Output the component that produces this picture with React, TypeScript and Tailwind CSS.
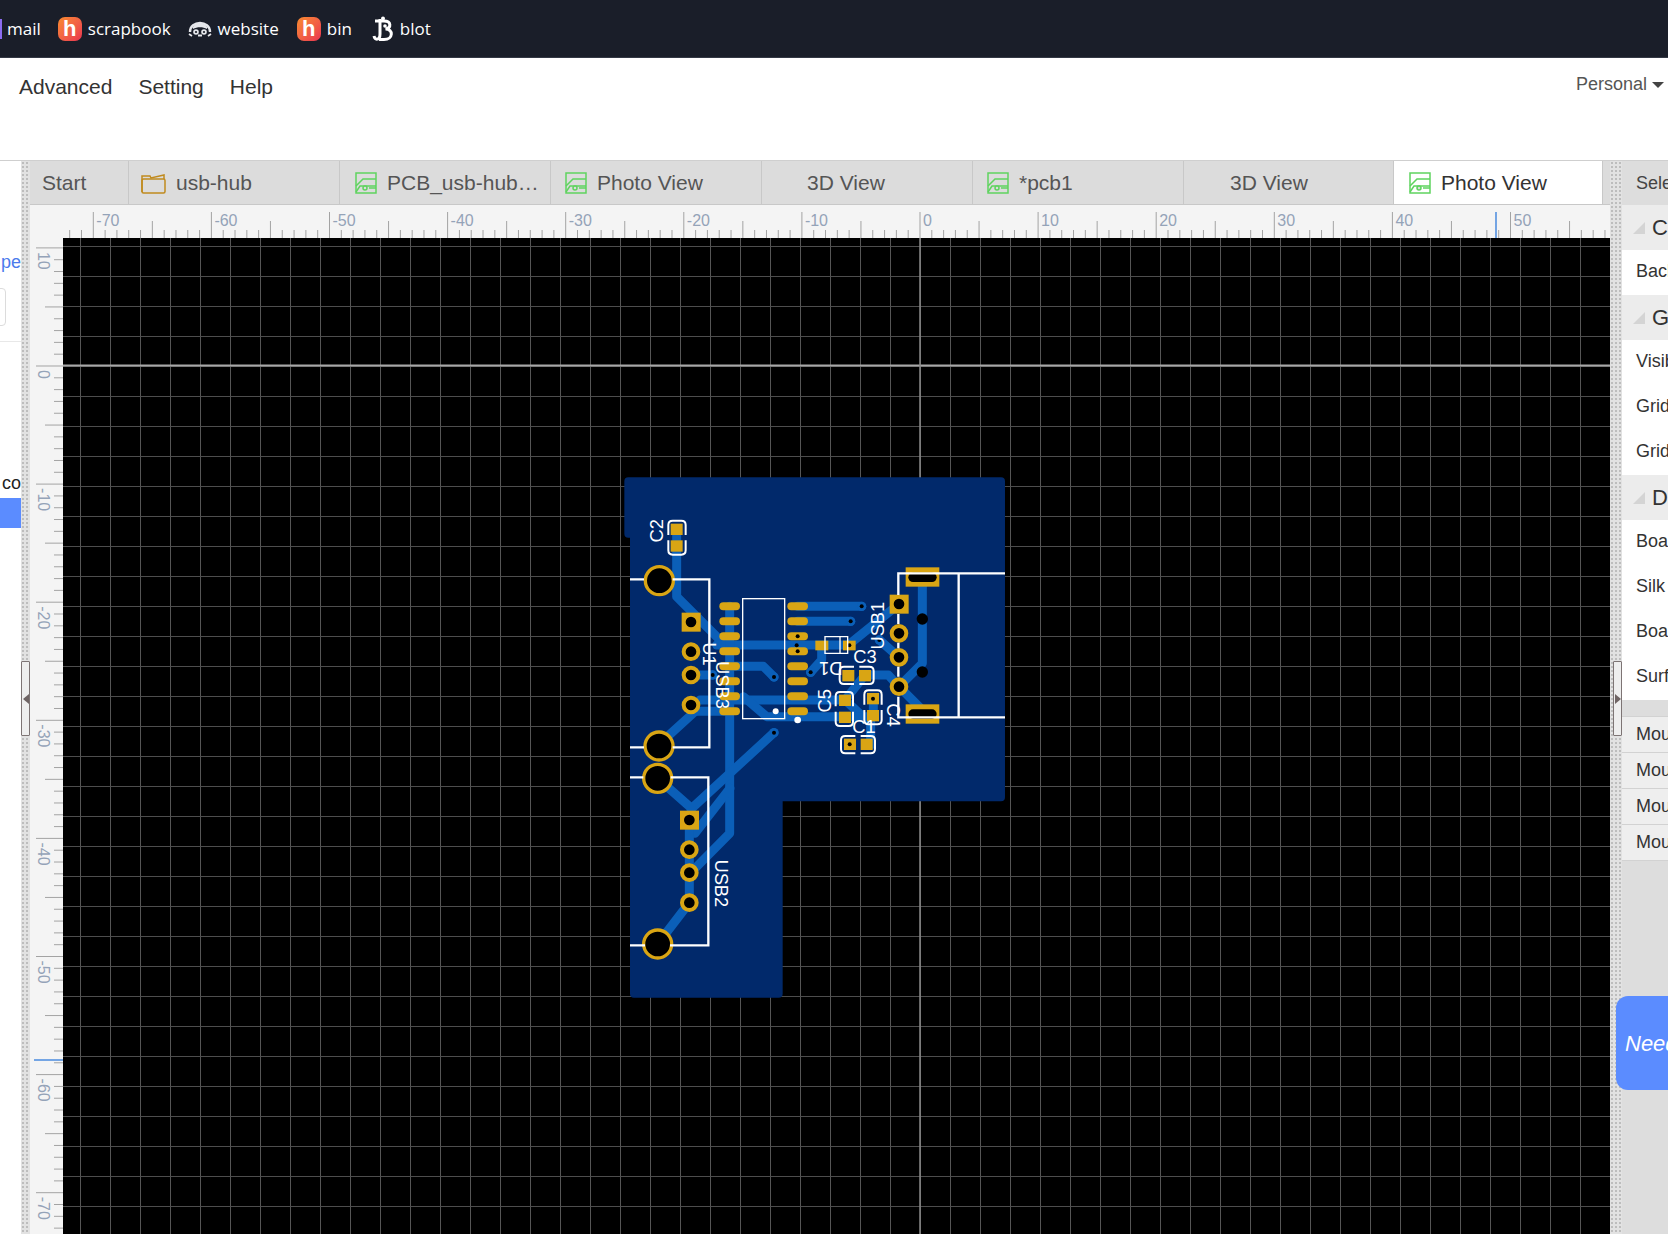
const dotted = 'bg-[#e2e2e2] bg-[radial-gradient(circle,#bdbdbd_1px,transparent_1px)] bg-[length:4px_4px]'

const ORIGIN_X = 920
const ORIGIN_Y = 366
const MM = 11.81

function range(from: number, to: number) {
  const out: number[] = []
  for (let i = from; i <= to; i++) out.push(i)
  return out
}

function HBadge() {
  return (
    <span className="flex h-6 w-6 items-center justify-center rounded-[7px] bg-gradient-to-br from-[#f98a2c] to-[#e9304f] font-['Liberation_Sans',sans-serif] text-[22px] font-bold leading-none text-white">
      h
    </span>
  )
}

function GhostIcon() {
  return (
    <svg width="24" height="24" viewBox="0 0 24 24" fill="none">
      <path d="M2 15 C2 3 22 3 22 15" stroke="#e5e7eb" strokeWidth="2.4" />
      <path d="M5 10 C8 5 16 5 19 10 L19 12 C15 9.5 9 9.5 5 12 Z" fill="#e5e7eb" />
      <circle cx="8" cy="15" r="2.8" fill="#e5e7eb" />
      <circle cx="16" cy="15" r="2.8" fill="#e5e7eb" />
      <circle cx="8" cy="15" r="1.1" fill="#1a1e29" />
      <circle cx="16" cy="15" r="1.1" fill="#1a1e29" />
      <path d="M1 17 L4 19 M23 17 L20 19 M10 18.5 H14" stroke="#e5e7eb" strokeWidth="1.8" />
    </svg>
  )
}

function BlotIcon() {
  return (
    <svg width="22" height="26" viewBox="0 0 22 26" fill="none">
      <path d="M3 5 H12 C19.5 5 19.5 12 13.5 13 C21.5 13 21.5 23.5 12 23.5 H7" stroke="#fff" strokeWidth="3" />
      <path d="M8 3 V18 C8 24.5 3 24.5 2 20" stroke="#fff" strokeWidth="3" />
      <circle cx="13" cy="10" r="1.8" fill="#fff" />
      <circle cx="11" cy="2.5" r="2" fill="#fff" />
    </svg>
  )
}

function FolderIcon() {
  return (
    <svg width="25" height="22" viewBox="0 0 25 22" fill="none" stroke="#c08a1e" strokeWidth="1.5">
      <path d="M1 20 V4 H9 L10 6 L23 3 V7" />
      <rect x="1" y="7" width="23" height="14" rx="1.5" />
    </svg>
  )
}

function PcbIcon() {
  return (
    <svg width="22" height="22" viewBox="0 0 22 22" fill="none" stroke="#5fd35f" strokeWidth="1.5">
      <rect x="1" y="1" width="20" height="20" />
      <path d="M1 14 L8 7 H21 M1 20 L5 14 H21 M14 16 H21" />
      <circle cx="10" cy="16" r="2" fill="#dcdcdc" />
    </svg>
  )
}

function TopBar() {
  const links = [
    { label: 'scrapbook', icon: <HBadge />, gap: 'ml-[17px]' },
    { label: 'website', icon: <GhostIcon />, gap: 'ml-[17px]' },
    { label: 'bin', icon: <HBadge />, gap: 'ml-[18px]' },
    { label: 'blot', icon: <BlotIcon />, gap: 'ml-[20px]' },
  ]
  return (
    <div className="flex h-[58px] shrink-0 items-center border-b border-[#343945] bg-[#1a1e29] pt-[1px] font-['Open_Sans',sans-serif] text-[17px] text-white">
      <span className="h-5 w-[2px] bg-[#8b6cf0]" />
      <span className="ml-[5px]">mail</span>
      {links.map((link) => (
        <div key={link.label} className={`flex items-center gap-[6px] ${link.gap}`}>
          {link.icon}
          <span>{link.label}</span>
        </div>
      ))}
    </div>
  )
}

function MenuBar() {
  return (
    <div className="flex h-[102px] shrink-0 items-start bg-white pl-[19px] pr-1 pt-[13px] font-['Liberation_Sans',sans-serif] text-[21px] text-[#333]">
      <span>Advanced</span>
      <span className="ml-[26px]">Setting</span>
      <span className="ml-[26px]">Help</span>
      <div className="ml-auto flex items-center gap-[5px] text-[18px] text-[#555]">
        <span>Personal</span>
        <span className="h-0 w-0 border-x-[6px] border-t-[6px] border-x-transparent border-t-[#444]" />
      </div>
    </div>
  )
}

const tabs = [
  { label: 'Start', width: 'w-[99px]', pad: 'pl-3', icon: null },
  { label: 'usb-hub', width: 'w-[211px]', pad: 'pl-[12px]', icon: <FolderIcon /> },
  { label: 'PCB_usb-hub…', width: 'w-[211px]', pad: 'pl-[15px]', icon: <PcbIcon /> },
  { label: 'Photo View', width: 'w-[211px]', pad: 'pl-[14px]', icon: <PcbIcon /> },
  { label: '3D View', width: 'w-[211px]', pad: 'pl-[45px]', icon: null },
  { label: '*pcb1', width: 'w-[211px]', pad: 'pl-[14px]', icon: <PcbIcon /> },
  { label: '3D View', width: 'w-[210px]', pad: 'pl-[46px]', icon: null },
  { label: 'Photo View', width: 'w-[209px]', pad: 'pl-[15px]', icon: <PcbIcon />, active: true },
]

function TabBar() {
  return (
    <div className="flex h-[44px] shrink-0 border-b border-[#c8c8c8] bg-[#dcdcdc] font-['Liberation_Sans',sans-serif] text-[21px]">
      {tabs.map((tab, i) => (
        <div
          key={i}
          className={`flex items-center gap-[10px] border-r border-[#c8c8c8] ${tab.width} ${tab.pad} ${
            tab.active ? 'bg-white text-[#333]' : 'text-[#555]'
          }`}
        >
          {tab.icon}
          <span>{tab.label}</span>
        </div>
      ))}
    </div>
  )
}

function HorizontalRuler() {
  return (
    <svg className="block shrink-0 bg-[#f4f4f4]" width="1580" height="33" viewBox="30 205 1580 33">
      {range(-72, 58).map((mm) => {
        const x = ORIGIN_X + mm * MM
        const major = mm % 10 === 0
        const mid = mm % 5 === 0
        return (
          <line
            key={mm}
            x1={x}
            x2={x}
            y1={major ? 212 : mid ? 221 : 230}
            y2={238}
            stroke="#a3a3a3"
            strokeWidth="1"
          />
        )
      })}
      {range(-7, 5).map((n) => (
        <text
          key={n}
          x={ORIGIN_X + n * 10 * MM + 3}
          y={226}
          fontFamily="Liberation Sans, sans-serif"
          fontSize="16"
          fill="#94a3b8"
        >
          {n * 10}
        </text>
      ))}
      <line x1="1496" x2="1496" y1="212" y2="238" stroke="#1d6fd8" strokeWidth="1.2" />
    </svg>
  )
}

function VerticalRuler() {
  return (
    <svg className="block shrink-0 bg-[#f4f4f4]" width="33" height="996" viewBox="30 238 33 996">
      {range(-12, 74).map((mm) => {
        const y = ORIGIN_Y + mm * MM
        const major = mm % 10 === 0
        const mid = mm % 5 === 0
        return (
          <line
            key={mm}
            x1={major ? 36 : mid ? 45 : 54}
            x2={63}
            y1={y}
            y2={y}
            stroke="#a3a3a3"
            strokeWidth="1"
          />
        )
      })}
      {range(-1, 7).map((n) => {
        const y = ORIGIN_Y + n * 10 * MM + 4
        return (
          <text
            key={n}
            transform={`translate(38 ${y}) rotate(90)`}
            fontFamily="Liberation Sans, sans-serif"
            fontSize="16"
            fill="#94a3b8"
          >
            {n === 0 ? 0 : -n * 10}
          </text>
        )
      })}
      <line x1="34" x2="63" y1="1060" y2="1060" stroke="#1d6fd8" strokeWidth="1.2" />
    </svg>
  )
}

const GOLD = '#d9a514'
const TRACK = '#0b5fb8'
const SILK = '#ffffff'

const tracks = [
  'M230 210 V410 L390 570',
  'M350 555 H748',
  'M389 439 V1120 L285 1225',
  'M593 439 H785',
  'M593 484 H752',
  'M389 619 H490 L522 651',
  'M273 645 H338',
  'M300 720 H650 L735 720 L800 780',
  'M273 754 H390',
  'M180 850 L290 750',
  'M430 710 L500 770 H820 V716',
  'M522 818 L275 1045 L268 1080',
  'M173 955 L275 1045',
  'M390 985 L285 1120',
  'M268 1080 V1328 L173 1452',
  'M967 350 V610 L897 680 L967 750',
  'M897 432 L745 555',
  'M838 540 L897 592',
  'M795 645 H865 L897 680',
  'M735 720 L795 645',
  'M665 557 V600 L632 637',
  'M812 770 V855',
]

const vias = [
  [785, 439],
  [752, 484],
  [522, 651],
  [522, 818],
  [632, 637],
  [338, 645],
  [838, 540],
]

const smallDots = [
  [593, 529],
  [590, 556],
  [593, 574],
  [819, 716],
  [749, 853],
  [748, 556],
]

const sqPads = [
  [273, 486],
  [268, 1080],
  [897, 432],
]

const ringPads = [
  [273, 575],
  [273, 645],
  [273, 735],
  [268, 1169],
  [268, 1238],
  [268, 1328],
  [897, 520],
  [897, 592],
  [897, 680],
]

const bigHoles = [
  [178, 362],
  [177, 858],
  [173, 955],
  [173, 1452],
]

const silkLines = [
  'M1215 340 H895 V405 M895 462 V492 M895 548 V565 M895 620 V650 M895 710 V772 H1215 M1076 340 V772',
  'M90 358 H132 M218 358 H328 V862 H218 M132 862 H90',
  'M90 952 H130 M212 952 H325 V1456 H210 M135 1456 H90',
]

const labels = [
  { text: 'C2', x: 188, y: 212, rot: -90 },
  { text: 'U1', x: 308, y: 582, rot: 90 },
  { text: 'USB3', x: 348, y: 675, rot: 90 },
  { text: 'USB2', x: 345, y: 1270, rot: 90 },
  { text: 'USB1', x: 852, y: 497, rot: -90 },
  { text: 'C3', x: 795, y: 608, rot: 0 },
  { text: 'D1', x: 692, y: 606, rot: 180 },
  { text: 'C5', x: 692, y: 722, rot: -90 },
  { text: 'C4', x: 860, y: 765, rot: 90 },
  { text: 'C1', x: 792, y: 818, rot: 0 },
]

// two U shaped halves round a small capacitor, open in the middle
function CapOutline({ cx, cy, vertical }: { cx: number; cy: number; vertical?: boolean }) {
  const half = (sign: number) =>
    vertical
      ? `M${cx - 26} ${cy + sign * 8} V${cy + sign * 38} Q${cx - 26} ${cy + sign * 51} ${cx - 13} ${cy + sign * 51} H${cx + 13} Q${cx + 26} ${cy + sign * 51} ${cx + 26} ${cy + sign * 38} V${cy + sign * 8}`
      : `M${cx + sign * 8} ${cy - 26} H${cx + sign * 38} Q${cx + sign * 51} ${cy - 26} ${cx + sign * 51} ${cy - 13} V${cy + 13} Q${cx + sign * 51} ${cy + 26} ${cx + sign * 38} ${cy + 26} H${cx + sign * 8}`
  return (
    <g fill="none" stroke={SILK} strokeWidth="6">
      <path d={half(-1)} />
      <path d={half(1)} />
    </g>
  )
}

function Pad({ cx, cy }: { cx: number; cy: number }) {
  return <rect x={cx - 18} y={cy - 17} width="36" height="34" fill={GOLD} />
}

function Board() {
  const icY = [439, 484, 529, 574, 619, 664, 709, 754]
  return (
    <g transform="translate(600 460) scale(0.33333)">
      <path
        d="M85 52 H1203 Q1215 52 1215 64 V1012 Q1215 1024 1203 1024 H548 V1601 Q548 1613 536 1613 H102 Q90 1613 90 1601 V233 H85 Q73 233 73 221 V64 Q73 52 85 52 Z"
        fill="#01296b"
      />
      <g fill="none" stroke={TRACK} strokeWidth="27" strokeLinecap="round" strokeLinejoin="round">
        {tracks.map((d) => (
          <path key={d} d={d} />
        ))}
      </g>
      {icY.map((y) => (
        <g key={y}>
          <rect x={358} y={y - 12} width="62" height="24" rx="12" fill={GOLD} />
          <rect x={562} y={y - 12} width="62" height="24" rx="12" fill={GOLD} />
        </g>
      ))}
      {sqPads.map(([x, y]) => (
        <g key={`${x}-${y}`}>
          <rect x={x - 28} y={y - 28} width="57" height="57" fill={GOLD} />
          <circle cx={x} cy={y} r="16" fill="#000" />
        </g>
      ))}
      {ringPads.map(([x, y]) => (
        <circle key={`${x}-${y}`} cx={x} cy={y} r="22" fill="#000" stroke={GOLD} strokeWidth="12" />
      ))}
      {bigHoles.map(([x, y]) => (
        <circle key={`${x}-${y}`} cx={x} cy={y} r="42" fill="#000" stroke={GOLD} strokeWidth="10" />
      ))}
      <rect x="917" y="322" width="101" height="58" fill={GOLD} />
      <rect x="925" y="338" width="85" height="28" rx="14" fill="#000" />
      <rect x="917" y="733" width="101" height="58" fill={GOLD} />
      <rect x="925" y="748" width="85" height="28" rx="14" fill="#000" />
      <circle cx="967" cy="477" r="17" fill="#000" />
      <circle cx="967" cy="636" r="17" fill="#000" />
      <Pad cx={230} cy={208} />
      <Pad cx={230} cy={258} />
      <Pad cx={745} cy={647} />
      <Pad cx={795} cy={647} />
      <Pad cx={735} cy={721} />
      <Pad cx={735} cy={772} />
      <Pad cx={819} cy={716} />
      <Pad cx={819} cy={767} />
      <Pad cx={750} cy={853} />
      <Pad cx={800} cy={853} />
      <rect x="646" y="542" width="39" height="29" fill={GOLD} />
      <rect x="729" y="542" width="38" height="29" fill={GOLD} />
      {vias.map(([x, y]) => (
        <g key={`${x}-${y}`}>
          <circle cx={x} cy={y} r="14" fill={TRACK} />
          <circle cx={x} cy={y} r="6" fill="#000" />
        </g>
      ))}
      {smallDots.map(([x, y]) => (
        <circle key={`${x}-${y}`} cx={x} cy={y} r="6" fill="#000" />
      ))}
      <g fill="none" stroke={SILK} strokeWidth="7">
        {silkLines.map((d) => (
          <path key={d} d={d} />
        ))}
      </g>
      <rect x="428" y="416" width="126" height="360" fill="none" stroke={SILK} strokeWidth="4" />
      <circle cx="527" cy="754" r="9" fill={SILK} />
      <circle cx="593" cy="780" r="10" fill={SILK} />
      <path d="M675 530 H743 V580 H675 Z M720 530 V580" fill="none" stroke={SILK} strokeWidth="4" />
      <CapOutline cx={231} cy={233} vertical />
      <CapOutline cx={770} cy={646} />
      <CapOutline cx={733} cy={747} vertical />
      <CapOutline cx={819} cy={742} vertical />
      <CapOutline cx={774} cy={854} />
      {labels.map((l) => (
        <text
          key={l.text}
          transform={`translate(${l.x} ${l.y}) rotate(${l.rot})`}
          textAnchor="middle"
          fontFamily="Liberation Sans, sans-serif"
          fontSize="55"
          fill={SILK}
        >
          {l.text}
        </text>
      ))}
    </g>
  )
}

function Canvas() {
  return (
    <svg className="block bg-black" width="1547" height="996" viewBox="63 238 1547 996">
      <g stroke="#565656" strokeWidth="1">
        {range(-28, 23).map((k) => (
          <line key={k} x1={ORIGIN_X + k * 30 + 0.5} x2={ORIGIN_X + k * 30 + 0.5} y1="238" y2="1234" />
        ))}
      </g>
      <g stroke="#4d4d4d" strokeWidth="1">
        {range(-4, 29).map((k) => (
          <line key={k} y1={ORIGIN_Y + k * 30 + 0.5} y2={ORIGIN_Y + k * 30 + 0.5} x1="63" x2="1610" />
        ))}
      </g>
      <line x1="63" x2="1610" y1="365.5" y2="365.5" stroke="#a8a8a8" strokeWidth="2" />
      <line x1="920" x2="920" y1="238" y2="1234" stroke="#8a8a8a" strokeWidth="1.5" />
      <Board />
    </svg>
  )
}

function SplitHandle({ side }: { side: 'left' | 'right' }) {
  return (
    <div className="absolute top-[500px] left-0 flex h-[75px] w-[9px] items-center justify-center rounded-[1px] border border-[#7d7474] bg-[#eeeeee]">
      {side === 'left' ? (
        <span className="h-0 w-0 border-y-[5px] border-r-[6px] border-y-transparent border-r-[#6f6464]" />
      ) : (
        <span className="h-0 w-0 border-y-[5px] border-l-[6px] border-y-transparent border-l-[#6f6464]" />
      )}
    </div>
  )
}

function LeftPanel() {
  return (
    <div className="flex w-[21px] shrink-0 flex-col items-end overflow-hidden bg-white font-['Liberation_Sans',sans-serif]">
      <span className="mt-[90px] text-[18px] leading-[22px] text-[#4b7bec]">pe</span>
      <div className="mt-[15px] mr-[15px] h-[38px] w-[40px] shrink-0 rounded-[4px] border border-[#dcdcdc]" />
      <div className="mt-[15px] h-px w-full shrink-0 bg-[#e8e8e8]" />
      <span className="mt-[130px] text-[18px] leading-[22px] text-[#222]">co</span>
      <div className="mt-[4px] h-[30px] w-full shrink-0 bg-[#5b8cff]" />
    </div>
  )
}

function PanelSection({ title, rows }: { title: string; rows: string[] }) {
  return (
    <div>
      <div className="flex h-[45px] items-center bg-[#ececec] pl-[11px]">
        <span className="h-0 w-0 border-b-[12px] border-l-[12px] border-b-[#d4d4d4] border-l-transparent" />
        <span className="ml-[7px] text-[22px] text-[#333]">{title}</span>
      </div>
      {rows.map((row, i) => (
        <div key={i} className="flex h-[45px] items-center whitespace-nowrap pb-[3px] pl-[14px] text-[18px] text-[#333]">
          {row}
        </div>
      ))}
    </div>
  )
}

function RightPanel() {
  return (
    <div className="flex w-[46px] shrink-0 flex-col overflow-hidden bg-[#dddddd] font-['Liberation_Sans',sans-serif]">
      <div className="flex h-[44px] shrink-0 items-center whitespace-nowrap pl-[14px] text-[18px] text-[#444]">Select</div>
      <div className="shrink-0 bg-white">
        <PanelSection title="Canvas" rows={['Background']} />
        <PanelSection title="Grid" rows={['Visible', 'Grid', 'Grid']} />
        <PanelSection title="Display" rows={['Board', 'Silk', 'Board', 'Surface']} />
      </div>
      <div className="mt-[16px] shrink-0 border-t border-[#d2d2d2]">
        {['Mount', 'Mount', 'Mount', 'Mount'].map((m, i) => (
          <div
            key={i}
            className="flex h-[36px] items-center border-b border-[#d2d2d2] bg-[#eeeeee] pl-[14px] text-[18px] text-[#333]"
          >
            {m}
          </div>
        ))}
      </div>
    </div>
  )
}

export default function App() {
  return (
    <div className="flex h-[1234px] w-[1668px] flex-col overflow-hidden bg-white">
      <TopBar />
      <MenuBar />
      <div className="relative flex min-h-0 flex-1 border-t border-[#cfcfcf]">
        <LeftPanel />
        <div className={`relative w-[9px] shrink-0 ${dotted}`}>
          <SplitHandle side="left" />
        </div>
        <div className="flex w-[1580px] shrink-0 flex-col">
          <TabBar />
          <HorizontalRuler />
          <div className="flex shrink-0">
            <VerticalRuler />
            <Canvas />
          </div>
        </div>
        <div className={`relative w-[12px] shrink-0 ${dotted}`}>
          <div className="absolute left-[3px] top-0 h-full">
            <SplitHandle side="right" />
          </div>
        </div>
        <RightPanel />
        <div className="absolute right-0 top-[835px] flex h-[94px] w-[52px] items-center overflow-hidden whitespace-nowrap rounded-l-[12px] bg-[#5b8cff] pl-[9px] font-['Liberation_Sans',sans-serif] text-[22px] italic text-white">
          Need
        </div>
      </div>
    </div>
  )
}
